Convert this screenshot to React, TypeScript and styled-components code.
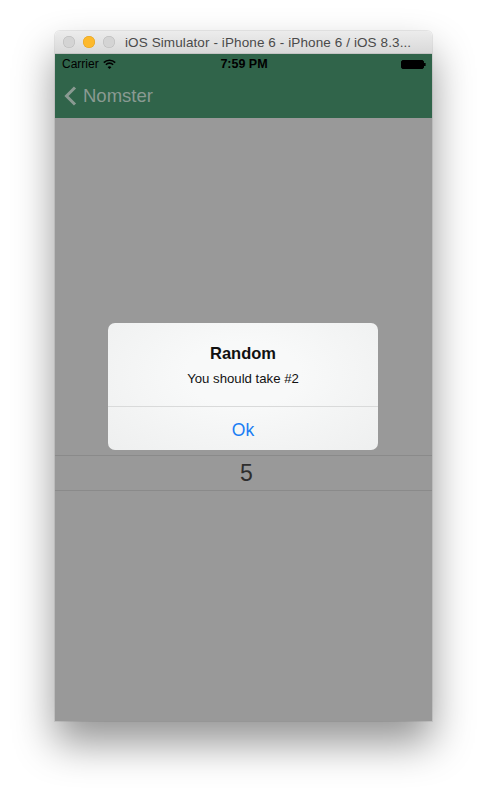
import React from "react";
import styled, { createGlobalStyle } from "styled-components";

const GlobalStyle = createGlobalStyle`
  html, body {
    margin: 0;
    padding: 0;
    background: #ffffff;
    font-family: "Liberation Sans", Arial, sans-serif;
  }
`;

const Page = styled.div`
  width: 487px;
  height: 801px;
  overflow: hidden;
  padding: 31px 0 0 55px;
  box-sizing: border-box;
`;

const Window = styled.div`
  width: 377px;
  display: flex;
  flex-direction: column;
  border-radius: 5px 5px 0 0;
  overflow: hidden;
  box-shadow: 0 22px 40px rgba(0, 0, 0, 0.42), 0 0 0 1px rgba(0, 0, 0, 0.08);
`;

const TitleBar = styled.div`
  height: 22px;
  display: flex;
  align-items: center;
  padding-left: 8px;
  gap: 8px;
  background: linear-gradient(#ececec, #d9d9d9);
  border-bottom: 1px solid #c4c4c4;
`;

const Light = styled.span<{ $color: string; $border: string }>`
  width: 12px;
  height: 12px;
  border-radius: 50%;
  background: ${(p) => p.$color};
  box-shadow: inset 0 0 0 0.5px ${(p) => p.$border};
  flex: none;
`;

const Title = styled.span`
  margin-left: 2px;
  font-size: 13.5px;
  color: #4a4a4a;
  white-space: nowrap;
  letter-spacing: 0.1px;
`;

const Screen = styled.div`
  position: relative;
  display: flex;
  flex-direction: column;
  height: 667px;
`;

const StatusBar = styled.div`
  height: 20px;
  background: #30644a;
  display: grid;
  grid-template-columns: 1fr auto 1fr;
  align-items: center;
  padding: 0 6px 0 7px;
  font-size: 12px;
  color: #000;
`;

const Carrier = styled.div`
  display: flex;
  align-items: center;
  gap: 4px;
`;

const Clock = styled.div`
  font-weight: bold;
  font-size: 12.5px;
`;

const Battery = styled.div`
  justify-self: end;
  display: flex;
  align-items: center;
`;

const NavBar = styled.div`
  height: 44px;
  background: #30644a;
  display: flex;
  align-items: center;
  padding-left: 9px;
  gap: 6px;
  color: #8a9a92;
  font-size: 18.5px;
`;

const Content = styled.div`
  flex: 1;
  background: #999999;
  padding-top: 337px;
`;

const PickerRow = styled.div`
  height: 34px;
  border-top: 1px solid #8a8a8a;
  border-bottom: 1px solid #8a8a8a;
  display: flex;
  align-items: center;
  justify-content: center;
  font-size: 23px;
  color: #2e2e2e;
  padding-left: 6px;
`;

const Alert = styled.div`
  position: absolute;
  left: 53px;
  top: 269px;
  width: 270px;
  border-radius: 7px;
  overflow: hidden;
  background: radial-gradient(ellipse at 50% 40%, #f8f9f9 30%, #eeefef 100%);
`;

const AlertBody = styled.div`
  height: 84px;
  display: flex;
  flex-direction: column;
  align-items: center;
  padding-top: 21px;
  box-sizing: border-box;
  border-bottom: 1px solid #d9dada;
`;

const AlertTitle = styled.div`
  font-size: 16.5px;
  font-weight: bold;
  color: #111;
`;

const AlertMessage = styled.div`
  margin-top: 8px;
  font-size: 13.2px;
  color: #111;
`;

const AlertButton = styled.div`
  height: 43px;
  padding-top: 3px;
  box-sizing: border-box;
  display: flex;
  align-items: center;
  justify-content: center;
  font-size: 17.5px;
  color: #1a7df4;
`;

export default function App() {
  return (
    <Page>
      <GlobalStyle />
      <Window>
        <TitleBar>
          <Light $color="#d4d4d4" $border="#b8b8b8" />
          <Light $color="#fdb92c" $border="#e0a020" />
          <Light $color="#d4d4d4" $border="#b8b8b8" />
          <Title>iOS Simulator - iPhone 6 - iPhone 6 / iOS 8.3...</Title>
        </TitleBar>
        <Screen>
          <StatusBar>
            <Carrier>
              Carrier
              <svg width="13" height="10" viewBox="0 0 13 10">
                <path d="M0.8 3.6 A8 8 0 0 1 12.2 3.6" stroke="#000" strokeWidth="1.6" fill="none" />
                <path d="M2.9 5.7 A5 5 0 0 1 10.1 5.7" stroke="#000" strokeWidth="1.6" fill="none" />
                <path d="M4.6 8.2 L6.5 10 L8.4 8.2 A2.7 2.7 0 0 0 4.6 8.2 Z" fill="#000" />
              </svg>
            </Carrier>
            <Clock>7:59 PM</Clock>
            <Battery>
              <svg width="25" height="9" viewBox="0 0 25 9">
                <rect x="0.5" y="0.5" width="22" height="8" rx="1.5" fill="#000" stroke="#000" />
                <rect x="23" y="3" width="1.6" height="3" fill="#000" />
              </svg>
            </Battery>
          </StatusBar>
          <NavBar>
            <svg width="13" height="20" viewBox="0 0 13 20">
              <path d="M11 1.5 L2.5 10 L11 18.5" stroke="#8a9a92" strokeWidth="3" fill="none" />
            </svg>
            Nomster
          </NavBar>
          <Content>
            <PickerRow>5</PickerRow>
          </Content>
          <Alert>
            <AlertBody>
              <AlertTitle>Random</AlertTitle>
              <AlertMessage>You should take #2</AlertMessage>
            </AlertBody>
            <AlertButton>Ok</AlertButton>
          </Alert>
        </Screen>
      </Window>
    </Page>
  );
}
